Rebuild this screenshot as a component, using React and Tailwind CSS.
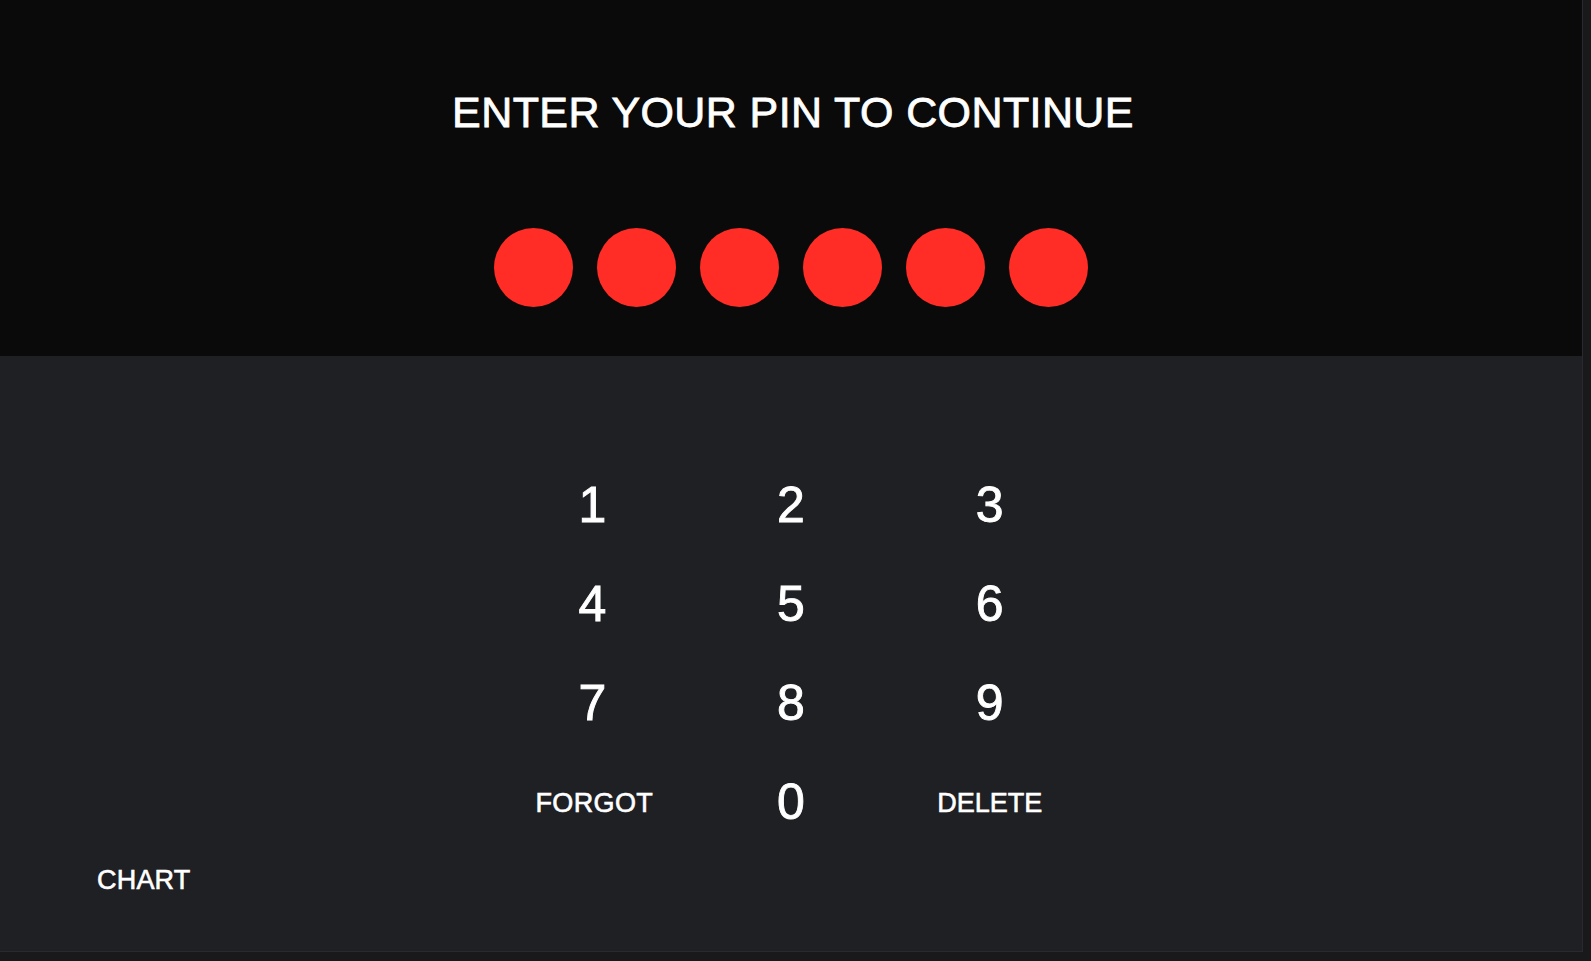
import { useState } from 'react'

const KEYS = ['1', '2', '3', '4', '5', '6', '7', '8', '9']

export default function App() {
  const [pin, setPin] = useState('')

  const press = (k) => {
    if (pin.length < 6) setPin(pin + k)
  }

  return (
    <div
      className="h-screen w-full bg-[#19191c] pr-2 pb-[9px] text-white"
      style={{ fontFamily: '"Liberation Sans", Arial, sans-serif' }}
    >
      <div className="h-full flex flex-col border-r border-b border-[#2a2a2e]">
        {/* Header */}
        <div className="h-[356px] shrink-0 bg-[#0a0a0a] flex flex-col items-center pt-[91px]">
          <h1 className="pl-1 text-[43px] leading-none tracking-[0.4px] [-webkit-text-stroke:0.8px_white]">
            ENTER YOUR PIN TO CONTINUE
          </h1>
          <div className="flex gap-6 mt-[94px]">
            {[0, 1, 2, 3, 4, 5].map((i) => (
              <div key={i} className="w-[79px] h-[79px] rounded-full bg-[#ff2d26]"></div>
            ))}
          </div>
        </div>

        {/* Keypad */}
        <div className="flex-1 bg-[#1f2024] flex flex-col pt-[99px]">
          <div className="mx-auto w-[596px] grid grid-cols-3">
            {KEYS.map((k) => (
              <button
                key={k}
                onClick={() => press(k)}
                className="h-[99px] flex items-center justify-center text-[50px] leading-none [-webkit-text-stroke:0.9px_white]"
              >
                {k}
              </button>
            ))}
            <button className="h-[99px] pt-1 pl-1 flex items-center justify-center text-[27px] leading-none tracking-[0.4px] [-webkit-text-stroke:0.6px_white]">
              FORGOT
            </button>
            <button
              onClick={() => press('0')}
              className="h-[99px] flex items-center justify-center text-[50px] leading-none [-webkit-text-stroke:0.9px_white]"
            >
              0
            </button>
            <button
              onClick={() => setPin(pin.slice(0, -1))}
              className="h-[99px] pt-1 flex items-center justify-center text-[27px] leading-none [-webkit-text-stroke:0.6px_white]"
            >
              DELETE
            </button>
          </div>
          <div className="pl-[97px] mt-4">
            <button className="text-[27px] leading-none tracking-[0.2px] [-webkit-text-stroke:0.6px_white]">CHART</button>
          </div>
        </div>
      </div>
    </div>
  )
}
